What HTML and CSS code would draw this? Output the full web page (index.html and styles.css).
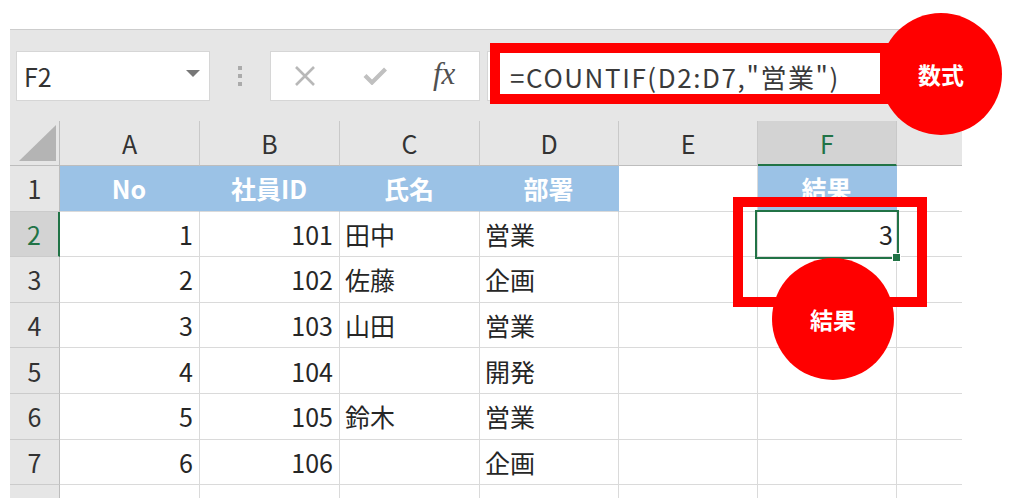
FILE: index.html
```html
<!DOCTYPE html>
<html lang="ja">
<head>
    <meta charset="UTF-8">
    <title>COUNTIF</title>
    <link rel="stylesheet" href="styles.css">
</head>
<body>
<div class="page">
    <div class="sheet">
        <!-- 数式バー -->
        <div class="toolbar">
            <div class="namebox">
                <span>F2</span>
                <span class="caret"></span>
            </div>
            <div class="grip"><i></i><i></i><i></i></div>
            <div class="fbtns">
                <svg class="ico ico-x" width="22" height="20" viewBox="0 0 22 20">
                    <path d="M2 1 L20 19 M20 1 L2 19" stroke="#b8b8b8" stroke-width="2.6" fill="none"/>
                </svg>
                <svg class="ico ico-ok" width="24" height="18" viewBox="0 0 24 18">
                    <path d="M2 8.5 L9 15.5 L22.5 2" stroke="#c0c0c0" stroke-width="4.2" fill="none"/>
                </svg>
                <span class="fx">fx</span>
            </div>
            <div class="formula">=COUNTIF(D2:D7,"営業")</div>
        </div>

        <!-- シート -->
        <div class="grid">
            <div class="corner"><span></span></div>
            <div class="h">A</div>
            <div class="h">B</div>
            <div class="h">C</div>
            <div class="h">D</div>
            <div class="h">E</div>
            <div class="h active">F</div>
            <div class="h last"></div>

            <div class="r">1</div>
            <div class="c blue">No</div>
            <div class="c blue">社員ID</div>
            <div class="c blue">氏名</div>
            <div class="c blue">部署</div>
            <div class="c"></div>
            <div class="c blue">結果</div>
            <div class="c last"></div>

            <div class="r active">2</div>
            <div class="c num">1</div>
            <div class="c num">101</div>
            <div class="c">田中</div>
            <div class="c">営業</div>
            <div class="c"></div>
            <div class="c num selected">3<span class="handle"></span></div>
            <div class="c last"></div>

            <div class="r">3</div>
            <div class="c num">2</div>
            <div class="c num">102</div>
            <div class="c">佐藤</div>
            <div class="c">企画</div>
            <div class="c"></div>
            <div class="c"></div>
            <div class="c last"></div>

            <div class="r">4</div>
            <div class="c num">3</div>
            <div class="c num">103</div>
            <div class="c">山田</div>
            <div class="c">営業</div>
            <div class="c"></div>
            <div class="c"></div>
            <div class="c last"></div>

            <div class="r">5</div>
            <div class="c num">4</div>
            <div class="c num">104</div>
            <div class="c"></div>
            <div class="c">開発</div>
            <div class="c"></div>
            <div class="c"></div>
            <div class="c last"></div>

            <div class="r">6</div>
            <div class="c num">5</div>
            <div class="c num">105</div>
            <div class="c">鈴木</div>
            <div class="c">営業</div>
            <div class="c"></div>
            <div class="c"></div>
            <div class="c last"></div>

            <div class="r">7</div>
            <div class="c num">6</div>
            <div class="c num">106</div>
            <div class="c"></div>
            <div class="c">企画</div>
            <div class="c"></div>
            <div class="c"></div>
            <div class="c last"></div>

            <div class="r">8</div>
            <div class="c"></div>
            <div class="c"></div>
            <div class="c"></div>
            <div class="c"></div>
            <div class="c"></div>
            <div class="c"></div>
            <div class="c last"></div>
        </div>
    </div>

    <!-- 注釈 -->
    <div class="mark mark-formula"></div>
    <div class="badge badge-formula">数式</div>
    <div class="mark mark-result"></div>
    <div class="badge badge-result">結果</div>
</div>
</body>
</html>
```

FILE: styles.css
```css
html, body {
    margin: 0;
    padding: 0;
    background: #fff;
    overflow: hidden;
}

body {
    font-family: "Noto Sans CJK JP", "Noto Sans", sans-serif;
    color: #262626;
}

.page {
    position: relative;
    width: 1024px;
    height: 498px;
    padding: 29px 0 0 10px;
    box-sizing: border-box;
}

.sheet {
    width: 952px;
    height: 469px;
    overflow: hidden;
    background: #e6e6e6;
}

/* 数式バー */
.toolbar {
    height: 92px;
    box-sizing: border-box;
    border-top: 1px solid #cdcdcd;
    padding: 21px 0 0 6px;
    display: flex;
    align-items: flex-start;
}

.namebox, .fbtns, .formula {
    height: 50px;
    box-sizing: border-box;
    background: #fff;
    border: 1px solid #d6d6d6;
    display: flex;
    align-items: center;
}

.namebox {
    width: 194px;
    padding: 0 9px 0 7px;
    justify-content: space-between;
    font-size: 25px;
    color: #333;
}

.caret {
    width: 0;
    height: 0;
    border-left: 7px solid transparent;
    border-right: 7px solid transparent;
    border-top: 7px solid #777;
    margin-top: -6px;
}

.grip {
    width: 60px;
    height: 50px;
    display: flex;
    flex-direction: column;
    align-items: center;
    justify-content: center;
    gap: 4px;
}

.grip i {
    width: 4px;
    height: 4px;
    background: #ababab;
}

.fbtns {
    width: 210px;
    padding-left: 23px;
}

.ico-ok {
    margin-left: 47px;
}

.fx {
    margin-left: 46px;
    font-family: "Liberation Serif", serif;
    font-style: italic;
    font-size: 31px;
    color: #505050;
    margin-top: -5px;
}

.formula {
    flex: 1;
    margin-left: 7px;
    padding-left: 22px;
    font-size: 26px;
    letter-spacing: 1.6px;
    color: #3a3a3a;
    border-right: none;
}

/* シート */
.grid {
    display: grid;
    grid-template-columns: 50px 140px 140px 140px 139px 139px 139px 65px;
    grid-template-rows: 45px;
    grid-auto-rows: 45.6px;
    font-size: 25px;
}

.grid > div {
    box-sizing: border-box;
    display: flex;
    align-items: center;
    justify-content: flex-start;
    white-space: nowrap;
}

.corner {
    background: #e6e6e6;
    border-right: 1px solid #bdbdbd;
    border-bottom: 1px solid #bdbdbd;
    align-items: flex-end !important;
    justify-content: flex-end !important;
    padding: 0 3px 4px 0;
}

.corner span {
    width: 0;
    height: 0;
    border-left: 37px solid transparent;
    border-bottom: 36px solid #b4b4b4;
}

.h {
    background: #e6e6e6;
    border-right: 1px solid #c9c9c9;
    border-bottom: 1px solid #bdbdbd;
    justify-content: center !important;
    color: #333;
}

.h.active {
    background: #d3d3d3;
    color: #217346;
    border-bottom: 2px solid #217346;
}

.h.last {
    border-right: none;
}

.r {
    background: #e6e6e6;
    border-right: 1px solid #bdbdbd;
    border-bottom: 1px solid #cbcbcb;
    justify-content: center !important;
    color: #333;
}

.r.active {
    background: #d3d3d3;
    color: #217346;
    border-right: 2px solid #217346;
}

.c {
    background: #fff;
    border-right: 1px solid #dadada;
    border-bottom: 1px solid #dadada;
    padding: 0 6px 0 5px;
}

.c.last {
    border-right: none;
}

.c.num {
    justify-content: flex-end !important;
}

.c.blue {
    background: #9bc2e6;
    border-right-color: #9bc2e6;
    color: #fff;
    font-weight: bold;
    justify-content: center !important;
}

.c.selected {
    position: relative;
    padding-right: 3px;
}

.c.selected::after {
    content: "";
    position: absolute;
    left: -3px;
    top: -2px;
    right: -3px;
    bottom: -3px;
    border: 2px solid #217346;
}

.handle {
    position: absolute;
    right: -5px;
    bottom: -6px;
    width: 7px;
    height: 7px;
    background: #217346;
    border: 1px solid #fff;
    z-index: 1;
}

/* 注釈 */
.mark {
    position: absolute;
    box-sizing: border-box;
    border: 10px solid #ff0000;
}

.mark-formula {
    left: 490px;
    top: 43px;
    width: 400px;
    height: 61px;
}

.mark-result {
    left: 733px;
    top: 197px;
    width: 194px;
    height: 110px;
}

.badge {
    position: absolute;
    width: 122px;
    height: 122px;
    border-radius: 50%;
    background: #ff0000;
    color: #fff;
    font-weight: bold;
    font-size: 23px;
    display: flex;
    align-items: center;
    justify-content: center;
}

.badge-formula {
    left: 880px;
    top: 13px;
}

.badge-result {
    left: 772px;
    top: 258px;
}
```
